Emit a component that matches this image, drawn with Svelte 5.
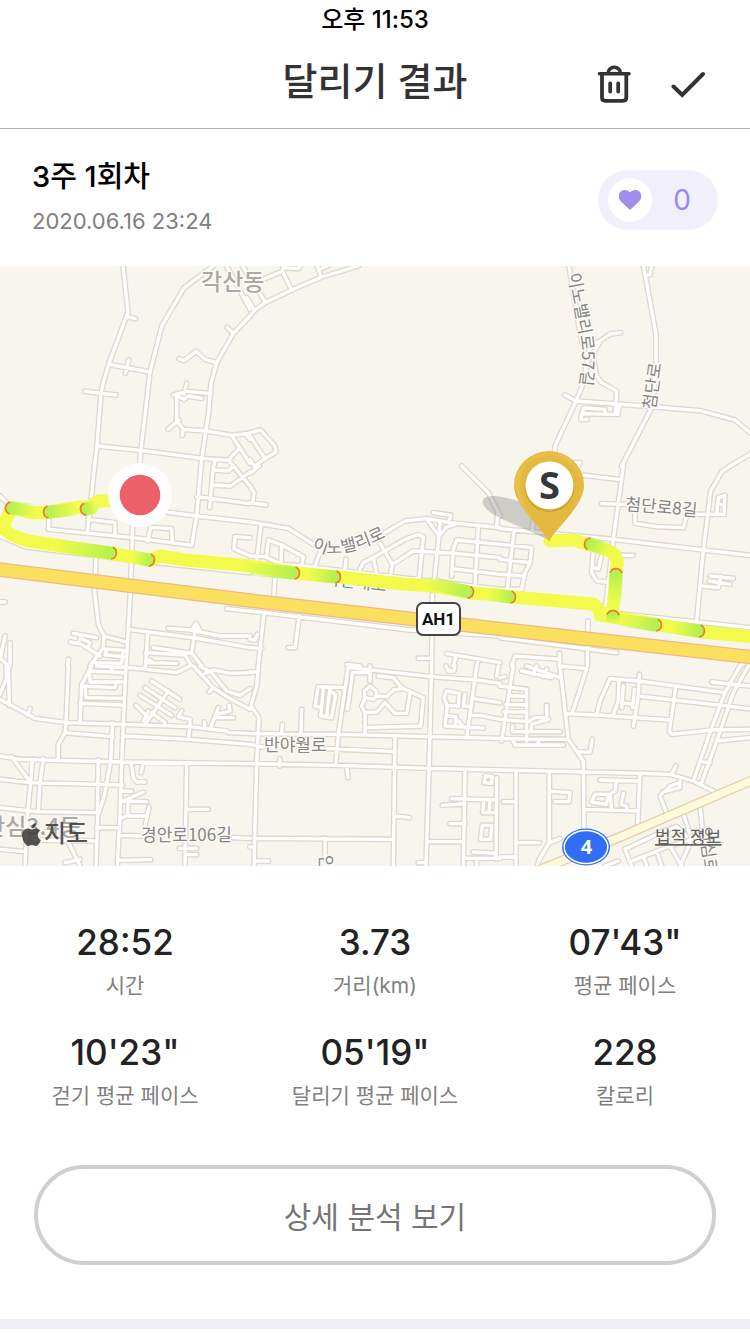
<script>
  const stats = [
    { value: '28:52', label: '시간' },
    { value: '3.73', label: '거리(km)' },
    { value: `07'43"`, label: '평균 페이스' },
    { value: `10'23"`, label: '걷기 평균 페이스' },
    { value: `05'19"`, label: '달리기 평균 페이스' },
    { value: '228', label: '칼로리' }
  ];

  // Street network, one entry per map tile; tile units are a third of a map unit.
  const tiles = [
    { x: 0, y: 0, d: 'M369 0L384 138L326 295L310 350L303 382L291 540L284 600M380 152L406 158M326 295L450 318M386 282L376 322M255 376L348 387M640 0L552 66L486 178L450 318L436 440L422 555L419 600M291 540L422 553L605 577L685 583L720 545M685 583L700 600M645 583L642 600M750 150L700 202L650 290L633 352L626 440L617 497L605 577L603 600M700 202L682 184M650 290L615 280L588 256L552 284L538 278M632 383L560 376L520 387M560 352L552 384M530 390L530 465L550 490L617 495L695 508L750 502M534 390L552 400L565 390L605 397M505 490L536 463M550 490L547 508M695 508L750 592M735 502L750 520M680 0L750 130M728 0L750 40' },
    { x: 250, y: 0, d: 'M0 150L15 132L45 110L125 72L215 33L325 0M-10 95L12 130M28 78L45 108M40 40L97 16L125 72M97 16L100 0M100 5L145 8L150 0M202 0L213 33M213 8L232 0M0 500L32 492L75 540L78 558L45 578L15 600M0 510L45 578M0 580L12 600' },
    { x: 500, y: 0, d: 'M207 0L240 200L262 290L245 365L228 405L165 540L163 600M285 232L300 225L330 204L362 200M300 225L278 265L290 330L305 350L350 375L346 445M195 387L228 405L430 420L600 434L705 462L750 500M430 0L436 30L468 205L468 290L458 420L365 600M455 0L450 25L436 30M354 445L245 443L243 460L262 460M245 443L252 426L315 430L315 445M358 420L354 445M750 565L690 600M215 590L240 590L235 600' },
    { x: 0, y: 200, d: 'M0 90L25 115M284 0L262 200M146 160L146 190L400 215L575 238L590 150L603 0M264 160L345 170L345 210M398 170L397 215L390 400L385 490L378 600M443 225L452 184L515 188L517 232M490 137L590 150L750 168M590 92L750 113M640 0L629 125M640 57L692 60L750 18M645 12L685 15L700 0M700 0L750 60M750 215L705 212L702 248L750 270M0 210L75 242L200 258L470 290L750 320M288 270L284 380L295 475L312 510L380 528M385 490L585 516L750 545M312 510L310 545L270 600M0 408L15 408M680 428L750 436M505 487L570 492L660 510L750 510M575 492L588 472L600 495M588 480L575 560L605 600M220 502L290 515M212 528L245 535L300 570M245 508L235 530M245 518L270 530L265 545M310 548L370 553L365 592L275 590M320 550L315 567L370 572M443 500L437 600M460 545L575 562M437 560L555 567L572 595M440 590L530 592M440 580L455 585M15 510L0 580M30 530L30 600M0 575L25 600M205 580L203 600' },
    { x: 250, y: 200, d: 'M0 168L115 187L190 235M405 200L465 165L530 158L600 170L750 185M0 270L45 272L95 295L155 300L200 305L750 370M33 175L20 285M50 270L55 222L95 237L160 272L155 300M95 237L93 290M215 245L195 300M288 280L285 310M330 310L340 290L375 272L465 220L505 206L520 212L508 335L480 345M390 232L427 295L422 325M370 275L380 325M427 295L490 255L615 262L750 275M530 160L567 210L570 170M567 210L590 183L615 175M567 210L552 350M550 140L603 148L597 165M605 330L610 250L620 222L750 235M607 308L750 325M685 185L675 355M635 0L715 80L750 150M740 185L743 140M0 22L28 0M0 60L12 80L8 110M0 110L48 117M75 335L72 385M0 435L480 492L750 510M42 440L25 600M148 450L135 545L115 545M547 385L545 600M505 577L545 577M0 520L15 522L22 505M0 545L35 547M290 595L330 600M590 563L750 590M618 570L610 600M685 580L680 600' },
    { x: 500, y: 200, d: 'M0 188L340 220L610 252L750 268M97 190L100 165M370 0L340 220L315 440M250 28L355 40M305 113L375 115M405 145L405 172L470 182L550 185L560 150M590 145L670 145M690 0L665 18L632 75L610 252L590 465M650 145L655 95L675 88L672 145M656 115L673 115M0 235L95 245L90 290L75 320L65 370L0 370M42 195L22 370M0 280L90 290M0 325L72 330M280 255L275 320L290 345L320 348M305 265L295 310L285 305M365 268L400 268M605 360L655 365L662 332M630 330L700 337M628 345L690 355M330 440L750 485M264 465L262 600M0 515L350 560M35 600L45 570L180 580L178 562M180 580L178 600M720 600L735 590' },
    { x: 0, y: 400, d: 'M205 0L198 170L195 200L175 235L175 280M378 0L370 175L365 290L360 450L352 600M0 100L105 157L200 170L370 175L570 182L680 195L685 200L750 202M83 147L90 128M25 0L28 118M18 0L20 35L0 85M338 170L332 285L313 390L293 450L288 600M195 200L338 212M370 210L565 220L750 235M0 270L60 280L240 285L370 288L750 293M35 272L88 345M97 280L92 350L83 440L75 600M130 278L120 350L115 435M0 340L90 350L368 357M0 425L110 437L290 440M295 282L292 440M290 485L355 485M100 522L290 525M0 550L75 557M205 528L240 600M195 590L240 580M275 0L245 55L240 170M240 112L370 117M270 15L370 20M268 15L270 48L368 48M245 60L345 65L350 48M255 60L258 95L368 97M335 0L335 18M290 0L390 5L530 20L570 0M435 0L430 10M580 0L640 65L680 92L750 130M628 77L640 65M600 0L635 20L680 75L720 88L750 68M615 22L640 12L690 22L750 20M435 175L505 75M455 45L540 100M435 65L525 125M420 88L515 148M455 140L495 170M430 165L445 135M408 118L445 155M565 220L570 182L570 160L535 152L545 135M615 185L613 168M630 190L655 125M650 145L690 135L687 118M650 155L700 155M393 290L400 335L410 348L435 348M430 290L423 320M362 375L395 376M362 405L440 407M370 405L430 378M385 407L383 450M360 458L380 450L438 450M447 423L435 480M360 508L430 510M700 515L750 517M352 583L452 581M560 293L555 600M560 430L625 430M538 547L590 547M555 566L590 566' },
    { x: 250, y: 400, d: 'M25 0L20 60L3 120L27 155L20 290L12 600M0 18L25 18M0 203L265 205L540 212L750 217M0 235L40 243M232 248L435 257M0 293L260 298L540 307L750 312M95 203L97 175M153 203L155 130M89 300L89 278M290 300L294 335M295 0L265 205L257 295M300 5L545 32L680 42L750 52M308 20L292 130M308 20L360 20M360 0L360 45M283 65L205 62L195 120L215 125L212 150L245 155L257 85L240 75M220 65L215 122M240 65L230 150M385 30L430 35L455 65L520 95L512 180L345 185M345 200L345 140L335 120L345 95L343 75L360 60L378 75L380 90L370 100L345 95M380 90L410 92L430 72L455 68M345 140L380 138L405 110L435 142L470 142L480 85M435 210L430 600M545 0L537 310L528 600M435 450L478 455M12 517L430 520M225 517L225 580M505 590L528 590M12 585L55 585M0 543L12 543M645 310L640 600M530 527L640 527M577 418L645 413M605 398L740 402M600 473L645 473M740 335L738 580M670 558L738 562M640 577L750 577M680 580L680 600M702 350L706 330L727 332L725 352ZM702 405L698 440L735 440M720 405L717 440M692 520L697 478L725 478L722 520ZM680 0L650 215M588 0L595 15L612 15L615 0M585 180L592 120L582 95L590 75L628 82L625 120L592 118M585 180L700 186M645 85L640 120L665 122M670 98L750 110M660 148L690 148L750 160M590 150L618 152L615 180M625 165L640 182M740 30L745 0' },
    { x: 500, y: 400, d: 'M0 60L80 70L80 225M40 0L5 225M25 90L80 90M18 115L80 117M12 137L80 138M0 160L85 167L105 155L140 155L140 118M145 160L95 175L93 195M38 180L38 197L180 197M0 218L205 220M40 225L45 237L190 237M115 222L115 237M180 0L205 220L250 285L252 490M235 258L270 258L277 220M180 0L260 8L218 138M65 15L155 35M80 0L180 35M110 0L100 25M140 10L130 32M0 35L15 32M0 312L252 318L425 322L510 325L580 345L645 378M195 143L290 147L510 162M290 147L300 105L330 38L415 45L675 80M418 25L415 90L400 180M415 90L750 128M357 45L355 105L340 145M527 65L508 195L515 205L635 192L750 190M370 60L365 125M403 70L398 125M365 110L398 115M635 48L750 60M720 0L675 80L630 200L580 345M745 0L700 80L650 225L605 350M650 225L750 215M610 288L630 290M515 325L528 300M48 318L48 600M148 318L148 530L118 580L112 600M148 530L180 518M0 573L48 573M48 530L118 530M10 407L48 407M148 376L210 380L207 407L165 407M420 322L413 475M300 342L415 345M350 342L345 375L330 385L335 430M255 430L415 435M330 385L285 385L275 408L320 415L325 385M370 382L363 415L380 420L380 432M498 437L480 390L490 378L540 365L540 345M500 372L510 360L540 350M548 437L575 520L545 590M600 415L608 500M375 550L480 500L530 482L560 510M375 550L395 600M395 585L510 540L575 520M510 540L545 600M430 570L440 600M470 555L485 600M315 600L355 585' }
  ];

  // Pace-change markers: position on the route, heading, and length of the green fade.
  const splits = [
    [11, 242, 185, 26], [49, 246, 175, 30], [86, 243, 170, 12],
    [111, 287, 8, 60], [149, 294, 10, 18], [294, 307, 5, 55],
    [335, 311, 5, 28], [468, 326, 14, 45], [510, 331, 6, 22],
    [656, 359, 8, 38], [699, 365, 8, 28], [590, 278, 195, 22],
    [616, 308, -88, 30], [613, 350, -88, 8]
  ];
</script>

<main class="screen">
  <div class="status"><time>오후 11:53</time></div>

  <header class="topbar">
    <h1>달리기 결과</h1>
    <div class="actions">
      <button type="button" aria-label="삭제">
        <svg viewBox="0 0 34 40" width="34" height="40" fill="none" stroke="#333" stroke-width="4">
          <path d="M11 9.500a6 6 0 0 1 12.500 0" stroke-width="3.500" />
          <path d="M2.500 9.700h29.500" stroke-linecap="round" stroke-width="3.600" />
          <path d="M5 10v23.500q0 3.300 3.300 3.300h17.700q3.300 0 3.300-3.300V10" stroke-width="3.800" />
          <path d="M13.200 19.500v8M21.200 19.500v8" stroke-linecap="round" stroke-width="3.800" />
        </svg>
      </button>
      <button type="button" aria-label="확인">
        <svg viewBox="0 0 34 40" width="34" height="40" fill="none" stroke="#333" stroke-width="4" stroke-linecap="round">
          <path d="M2.500 22.500L11.200 31L32 10" />
        </svg>
      </button>
    </div>
  </header>

  <section class="session">
    <div>
      <h2>3주 1회차</h2>
      <p>2020.06.16 23:24</p>
    </div>
    <button type="button" class="like" aria-label="좋아요 0">
      <span class="heart">
        <svg viewBox="0 0 24 22" width="24" height="22">
          <path d="M12 21L3 12.500C-.2 9.400.2 4.500 3 2.300C6 0 10 .7 12 3.600C14 .7 18 0 21 2.300C23.800 4.500 24.200 9.400 21 12.500Z" fill="#9f8feb" />
        </svg>
      </span>
      <span class="count">0</span>
    </button>
  </section>

  <svg class="map" viewBox="0 0 750 600" role="img" aria-label="달리기 경로 지도">
    <defs>
      <linearGradient id="fade">
        <stop offset="0" stop-color="#bdf34c" stop-opacity="0" />
        <stop offset="1" stop-color="#b4f04e" />
      </linearGradient>
      <path id="inno57" d="M568 8L581 76Q584 100 578 130" />
      <path id="inno" d="M312 282Q336 298 392 268" />
    </defs>

    <rect width="750" height="600" fill="#f8f5ec" />

    <g class="casing">
      {#each tiles as t}
        <path d={t.d} transform="translate({t.x} {t.y}) scale(0.33333)" />
      {/each}
    </g>
    <g class="road">
      {#each tiles as t}
        <path d={t.d} transform="translate({t.x} {t.y}) scale(0.33333)" />
      {/each}
    </g>

    <g fill="none">
      <path d="M532 607L620 571L755 513" stroke="#eccba4" stroke-width="10" />
      <path d="M532 607L620 571L755 513" stroke="#fdfbdc" stroke-width="7.500" />
      <path d="M-5 303L250 334.500L500 363L755 391.500" stroke="#efb98a" stroke-width="14.500" />
      <path d="M-5 303L250 334.500L500 363L755 391.500" stroke="#fbdf5e" stroke-width="12" />
    </g>

    <g class="label">
      <text x="201" y="24" class="district">각산동</text>
      <text x="-16" y="569" class="district">안심3.4동</text>
      <text><textPath href="#inno57">이노밸리로57길</textPath></text>
      <text transform="translate(655 144) rotate(-82)">첨단로</text>
      <text transform="translate(625 244) rotate(5)">첨단로8길</text>
      <text><textPath href="#inno">이노밸리로</textPath></text>
      <text transform="translate(324 318) rotate(7)">각산대로</text>
      <text x="264" y="485">반야월로</text>
      <text x="141" y="575">경안로106길</text>
      <text transform="translate(320 589) rotate(90)">안심로</text>
      <text transform="translate(699 562) rotate(82)">안심로</text>
    </g>

    <g class="route">
      <path d="M112 235L98 235Q93 237 91 242L80 241L50 246L33 247L12 242Q7 250 3 262Q10 270 28 275L100 286L113 288L151 294L160 290L185 294L250 300L297 307L340 311L403 318L433 320L472 327L500 329L513 331L593 338Q600 342 600 349L613 351L660 359L702 366L755 371" />
      <path d="M550 275L573 274L587 278L607 284Q618 288 617 298L616 307L613 343L606 350" />
    </g>
    {#each splits as [x, y, angle, length]}
      <g transform="translate({x} {y}) rotate({angle})">
        <rect x={-length} y="-6.500" width={length} height="13" fill="url(#fade)" />
        <path d="M0 -6.500A6.500 6.500 0 0 1 0 6.500Z" fill="#b4f04e" />
        <path d="M1 -6A6.300 6.300 0 0 1 1 6" fill="none" stroke="#f0782c" stroke-width="1.600" />
      </g>
    {/each}

    <rect x="417" y="337" width="43" height="32" rx="6" fill="#fff" stroke="#444" stroke-width="2" />
    <text class="ah" x="438.500" y="359">AH1</text>

    <ellipse cx="586" cy="581" rx="24" ry="18.500" fill="#306ff5" />
    <ellipse cx="586" cy="581" rx="21.800" ry="16.500" fill="#306ff5" stroke="#fff" stroke-width="1.500" />
    <text class="shield" x="586.500" y="588">4</text>

    <circle cx="140" cy="229" r="32" fill="#fff" />
    <circle cx="140" cy="229" r="20.300" fill="#ec6069" />

    <path d="M549 274L500 252C475 240 478 226 502 231C520 234 540 242 546 256Z" fill="#777" fill-opacity=".32" />
    <path d="M549 275.500C543 263 514 240 514 219.500A35 34.500 0 0 1 584 219.500C584 240 555 263 549 275.500Z" fill="#e3b93f" />
    <path d="M549 275C543 263 515 240 515 219.500A34 33.500 0 0 1 583 219.500Q574 190 549 190Q522 190 520 219Q522 244 549 275Z" fill="#eac453" fill-opacity=".6" />
    <circle cx="549.500" cy="221" r="25" fill="#cfa52f" />
    <circle cx="549.500" cy="219.500" r="24" fill="#fff" />
    <text class="start" x="549.500" y="233">S</text>

    <g class="brand">
      <path transform="translate(20 557) scale(0.96)" d="M12.152 6.896c-.948 0-2.415-1.078-3.960-1.040-2.040.027-3.910 1.183-4.961 3.014-2.117 3.675-.546 9.103 1.519 12.090 1.013 1.454 2.208 3.090 3.792 3.039 1.520-.065 2.090-.987 3.935-.987 1.831 0 2.350.987 3.960.948 1.637-.026 2.676-1.480 3.676-2.948 1.156-1.688 1.636-3.325 1.662-3.415-.039-.013-3.182-1.221-3.220-4.857-.026-3.040 2.480-4.494 2.597-4.559-1.429-2.090-3.623-2.324-4.390-2.376-2-.156-3.675 1.090-4.610 1.090zM15.530 3.830c.843-1.012 1.400-2.427 1.245-3.830-1.207.052-2.662.805-3.532 1.818-.780.896-1.454 2.338-1.273 3.714 1.338.104 2.715-.688 3.559-1.701" />
      <text x="44" y="576">지도</text>
    </g>
    <a href="#legal"><text class="legal" x="655" y="577">법적 정보</text></a>
  </svg>

  <dl class="stats">
    {#each stats as s}
      <div>
        <dt>{s.label}</dt>
        <dd>{s.value}</dd>
      </div>
    {/each}
  </dl>

  <div class="more">
    <button type="button">상세 분석 보기</button>
  </div>
  <div class="divider"></div>
</main>

<style>
  :global(body) {
    background: #fff;
  }
  .screen {
    font-family: Inter, "Noto Sans CJK KR", sans-serif;
    color: #222;
  }
  button {
    font: inherit;
    color: inherit;
    background: none;
    border: 0;
    padding: 0;
    cursor: pointer;
  }
  h1, h2, p, dl, dd {
    margin: 0;
  }
  .status {
    height: 40px;
    line-height: 40px;
    text-align: center;
    font-size: 24px;
    font-weight: 500;
    color: #000;
  }
  .topbar {
    display: grid;
    grid-template-columns: 1fr auto 1fr;
    align-items: center;
    height: 88px;
    padding: 0 45px;
    border-bottom: 1px solid #b2b2b2;
  }
  h1 {
    grid-column: 2;
    font-size: 38px;
    line-height: 48px;
    font-weight: 500;
    color: #333;
    padding-bottom: 6px;
  }
  .actions {
    display: flex;
    justify-content: flex-end;
    gap: 40px;
  }
  .actions svg, .heart svg {
    display: block;
  }
  .session {
    display: flex;
    justify-content: space-between;
    align-items: center;
    padding: 28px 32px 29px;
  }
  h2 {
    font-size: 29px;
    line-height: 40px;
    font-weight: 500;
    color: #000;
  }
  .session p {
    margin-top: 8px;
    font-size: 22px;
    line-height: 32px;
    color: #808080;
  }
  .like {
    display: flex;
    align-items: center;
    width: 120px;
    height: 60px;
    padding: 0 6px 0 10px;
    margin-top: 6px;
    border-radius: 30px;
    background: #f1effc;
  }
  .heart {
    display: grid;
    place-items: center;
    width: 44px;
    height: 44px;
    border-radius: 50%;
    background: #fff;
  }
  .count {
    flex: 1;
    font-size: 28px;
    color: #998ae6;
  }
  .map {
    display: block;
    width: 100%;
    height: auto;
    font-family: "Noto Sans CJK KR", sans-serif;
  }
  .casing, .road, .route {
    fill: none;
    stroke-linecap: round;
    stroke-linejoin: round;
  }
  .casing {
    stroke: #ded8ce;
    stroke-width: 18px;
  }
  .road {
    stroke: #fff;
    stroke-width: 10px;
  }
  .route {
    stroke: #f2fb4c;
    stroke-width: 13px;
  }
  .label {
    font-size: 17px;
    fill: #858585;
    stroke: #fcfaf5;
    stroke-width: 3px;
    stroke-linejoin: round;
    paint-order: stroke;
  }
  .district {
    font-size: 23px;
    font-weight: 500;
    fill: #aaa9a5;
  }
  .ah {
    font: bold 17px Roboto, sans-serif;
    text-anchor: middle;
    fill: #111;
  }
  .shield {
    font: bold 20px "Noto Sans", sans-serif;
    text-anchor: middle;
    fill: #fff;
  }
  .start {
    font: bold 38px "Open Sans", sans-serif;
    text-anchor: middle;
    fill: #383838;
  }
  .brand {
    font-size: 24px;
    font-weight: 500;
    fill: #3c3c3c;
    fill-opacity: 0.88;
  }
  .legal {
    font-size: 17px;
    fill: #626262;
    text-decoration: underline;
  }
  .stats {
    display: grid;
    grid-template-columns: repeat(3, 1fr);
    row-gap: 31px;
    padding: 55px 0;
    text-align: center;
  }
  .stats div {
    display: flex;
    flex-direction: column-reverse;
    gap: 9px;
  }
  dt {
    font-size: 21px;
    line-height: 28px;
    color: #808080;
  }
  dd {
    font-size: 35px;
    line-height: 42px;
    font-weight: 500;
  }
  .more {
    padding: 0 34px 54px;
  }
  .more button {
    width: 100%;
    height: 100px;
    border: 4px solid #cfcfcf;
    border-radius: 50px;
    font-size: 30px;
    color: #757575;
  }
  .divider {
    height: 10px;
    background: #eeeef7;
  }
</style>
